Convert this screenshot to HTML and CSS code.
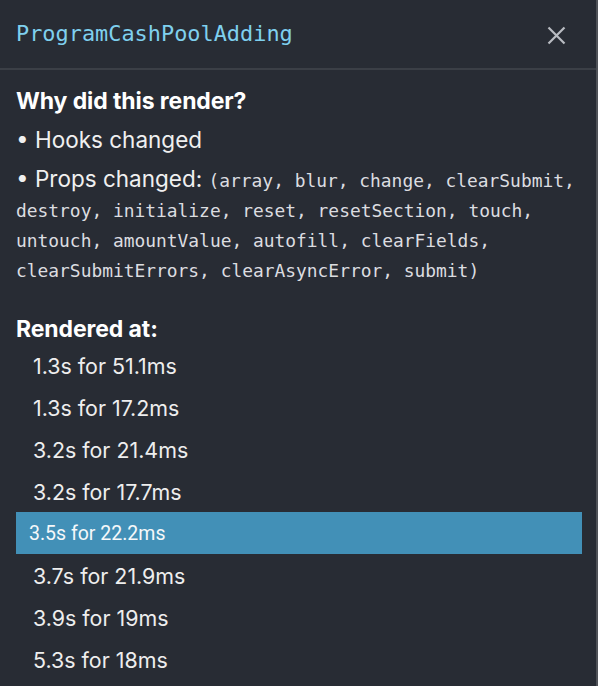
FILE: index.html
```html
<!DOCTYPE html>
<html>
<head>
<meta charset="utf-8">
<link rel="stylesheet" href="styles.css">
</head>
<body>
<div class="panel">
  <header class="header">
    <span class="title">ProgramCashPoolAdding</span>
    <button class="close" aria-label="Close">
      <svg width="19" height="19" viewBox="0 0 19 19"><path d="M1.5 1.5 L17.5 17.5 M17.5 1.5 L1.5 17.5" stroke="#b9bcc2" stroke-width="2.2" stroke-linecap="butt"/></svg>
    </button>
  </header>
  <section class="content">
    <div class="heading">Why did this render?</div>
    <div class="reason">• Hooks changed</div>
    <div class="reason">• Props changed: <span class="code">(array, blur, change, clearSubmit, destroy, initialize, reset, resetSection, touch, untouch, amountValue, autofill, clearFields, clearSubmitErrors, clearAsyncError, submit)</span></div>
    <div class="heading rendered">Rendered at:</div>
    <ul class="list">
      <li class="item">1.3s for 51.1ms</li>
      <li class="item">1.3s for 17.2ms</li>
      <li class="item">3.2s for 21.4ms</li>
      <li class="item">3.2s for 17.7ms</li>
      <li class="item selected">3.5s for 22.2ms</li>
      <li class="item">3.7s for 21.9ms</li>
      <li class="item">3.9s for 19ms</li>
      <li class="item">5.3s for 18ms</li>
    </ul>
  </section>
</div>
</body>
</html>
```
FILE: styles.css
```css
html, body {
  margin: 0;
  padding: 0;
  background: #282c34;
}
body {
  width: 598px;
  height: 686px;
  overflow: hidden;
}
.panel {
  width: 596px;
  height: 686px;
  border-right: 2px solid #4f5258;
  background: #282c34;
  font-family: Inter, "Noto Sans", sans-serif;
  color: #f2f2f2;
}
.header {
  height: 68px;
  border-bottom: 2px solid #3b3f46;
  display: flex;
  align-items: center;
  justify-content: space-between;
  padding: 0 30px 0 16px;
}
.title {
  font-family: "DejaVu Sans Mono", monospace;
  font-size: 21.9px;
  color: #7fd0ee;
  position: relative;
  top: -1px;
}
.close {
  background: none;
  border: 0;
  padding: 0;
  width: 19px;
  height: 19px;
  display: flex;
  position: relative;
  top: 1px;
}
.content {
  padding: 16px 16px 0 16px;
}
.heading {
  font-weight: 700;
  font-size: 23px;
  line-height: 30px;
  color: #ffffff;
  letter-spacing: -0.1px;
}
.reason {
  font-size: 22.5px;
  line-height: 30px;
  margin-top: 9px;
  color: #f0f0f0;
}
.code {
  font-family: "DejaVu Sans Mono", monospace;
  font-size: 17.9px;
  line-height: 1;
  color: #dcdde0;
}
.rendered {
  margin-top: 30px;
}
.list {
  list-style: none;
  margin: 0;
  padding: 0;
}
.item {
  height: 42px;
  line-height: 40px;
  padding-top: 2px;
  padding-left: 17px;
  font-size: 21.4px;
  color: #eeeeee;
  width: 566px;
  box-sizing: border-box;
}
.selected {
  background: #4290b7;
  font-family: Roboto, sans-serif;
  font-size: 19.5px;
  padding-left: 13px;
  color: #f5f8fa;
}
```
